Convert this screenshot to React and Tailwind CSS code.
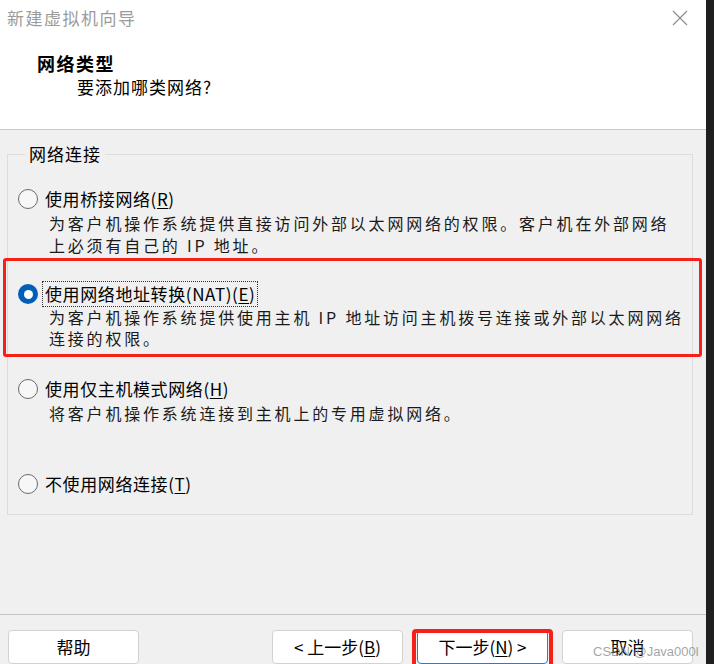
import { useState } from 'react';

const FONT = { fontFamily: '"Noto Sans CJK SC", "Noto Sans", sans-serif' };

// Letter with the mnemonic underline, as the Win32 dialog draws it
function Key({ children }) {
  return <span className="underline underline-offset-2">{children}</span>;
}

function Radio({ checked }) {
  if (checked) {
    return (
      <span className="flex h-[20px] w-[20px] shrink-0 items-center justify-center rounded-full bg-[#005fb8]">
        <span className="h-[9px] w-[9px] rounded-full bg-white" />
      </span>
    );
  }
  return <span className="h-[20px] w-[20px] shrink-0 rounded-full border border-[#6b6b6b] bg-[#f7f7f7]" />;
}

function Option({ checked, label, desc, descLeading, className, focused, onPick }) {
  return (
    <div className={className} onClick={onPick}>
      <div className="flex h-[26px] items-center">
        <Radio checked={checked} />
        <span
          className={`ml-[5px] px-[2px] text-[17px] leading-[24px] tracking-[0.6px] text-black ${
            focused ? 'outline outline-1 outline-dotted outline-[#333]' : ''
          }`}
        >
          {label}
        </span>
      </div>
      {desc && (
        <div className={`whitespace-nowrap pl-[31px] text-[16px] tracking-[2.8px] text-[#1a1a1a] ${descLeading}`}>
          {desc.map((line) => (
            <div key={line}>{line}</div>
          ))}
        </div>
      )}
    </div>
  );
}

function Button({ children, primary }) {
  return (
    <button
      className={`h-[34px] w-[131px] rounded-[4px] border bg-white text-[17px] text-black ${
        primary ? 'border-[#2a7bd0]' : 'border-[#d2d2d2]'
      }`}
    >
      {children}
    </button>
  );
}

export default function App() {
  const [mode, setMode] = useState('nat');

  return (
    <div className="flex h-[664px] w-[714px] overflow-hidden bg-[#1f1f1f]" style={FONT}>
      <div className="relative flex w-[706px] flex-col bg-[#f0f0f0]">
        {/* title bar + wizard header */}
        <div className="h-[130px] bg-white">
          <div className="flex h-[36px] items-center justify-between pl-[7px] pr-[18px]">
            <span className="text-[17px] tracking-[1.5px] text-[#9b9b9b]">新建虚拟机向导</span>
            <svg width="16" height="16" viewBox="0 0 16 16" className="text-[#8a8a8a]">
              <path d="M1 1 L15 15 M15 1 L1 15" stroke="currentColor" strokeWidth="1.1" fill="none" />
            </svg>
          </div>
          <div className="pl-[37px] pt-[15px]">
            <div className="text-[18px] font-bold leading-[24px] tracking-[1.5px] text-black">网络类型</div>
            <div className="pl-[40px] text-[17px] leading-[24px] tracking-[1px] text-black">要添加哪类网络?</div>
          </div>
        </div>
        <div className="h-px bg-[#c8c8c8]" />

        {/* page body */}
        <div className="h-[490px] px-[7px] pt-[13px]">
          <fieldset className="w-[686px] border border-[#dcdcdc] pb-[17px] pl-[10px]">
            <legend className="ml-[7px] px-[4px] text-[17px] leading-[24px] tracking-[1px] text-black">网络连接</legend>
            <Option
              className="mt-[20px]"
              checked={mode === 'bridge'}
              onPick={() => setMode('bridge')}
              label={<>使用桥接网络(<Key>R</Key>)</>}
              descLeading="leading-[22px]"
              desc={['为客户机操作系统提供直接访问外部以太网网络的权限。客户机在外部网络', '上必须有自己的 IP 地址。']}
            />
            <Option
              className="mt-[25px]"
              checked={mode === 'nat'}
              focused={mode === 'nat'}
              onPick={() => setMode('nat')}
              label={<>使用网络地址转换(NAT)(<Key>E</Key>)</>}
              descLeading="leading-[21px]"
              desc={['为客户机操作系统提供使用主机 IP 地址访问主机拨号连接或外部以太网网络', '连接的权限。']}
            />
            <Option
              className="mt-[27px]"
              checked={mode === 'host'}
              onPick={() => setMode('host')}
              label={<>使用仅主机模式网络(<Key>H</Key>)</>}
              descLeading="leading-[22px]"
              desc={['将客户机操作系统连接到主机上的专用虚拟网络。']}
            />
            <Option
              className="mt-[47px]"
              checked={mode === 'none'}
              onPick={() => setMode('none')}
              label={<>不使用网络连接(<Key>T</Key>)</>}
            />
          </fieldset>
        </div>
        <div className="h-px bg-[#c4c4c4]" />

        {/* footer buttons */}
        <div className="flex items-start pl-[8px] pr-[13px] pt-[15px]">
          <Button>帮助</Button>
          <div className="ml-auto flex gap-[14px]">
            <Button>&lt; 上一步(<Key>B</Key>)</Button>
            <Button primary>下一步(<Key>N</Key>) &gt;</Button>
            <Button>取消</Button>
          </div>
        </div>

        {/* red annotation boxes drawn over the screenshot */}
        <div className="pointer-events-none absolute left-[3px] top-[258px] h-[99px] w-[699px] rounded-[3px] border-[3px] border-[#f5201a]" />
        <div className="pointer-events-none absolute left-[412px] top-[629px] h-[44px] w-[141px] rounded-[4px] border-[4px] border-[#f5201a]" />

        {/* CSDN watermark */}
        <div
          className="pointer-events-none absolute left-[593px] top-[642px] whitespace-nowrap text-[13px] text-[#8c8c8c]/80"
          style={{ fontFamily: '"Liberation Sans", sans-serif' }}
        >
          CSDN @Java000l
        </div>
      </div>
    </div>
  );
}
